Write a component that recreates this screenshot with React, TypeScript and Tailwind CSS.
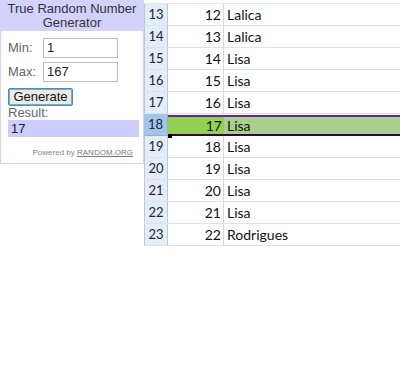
import React from 'react';

const rows: [number, number, string][] = [
    [13, 12, 'Lalica'],
    [14, 13, 'Lalica'],
    [15, 14, 'Lisa'],
    [16, 15, 'Lisa'],
    [17, 16, 'Lisa'],
    [18, 17, 'Lisa'],
    [19, 18, 'Lisa'],
    [20, 19, 'Lisa'],
    [21, 20, 'Lisa'],
    [22, 21, 'Lisa'],
    [23, 22, 'Rodrigues'],
];

function RandomWidget() {
    return (
        <div className="flex h-[164px] w-[144px] shrink-0 flex-col border border-[#d4d4fb] bg-white font-['Liberation_Sans',sans-serif]">
            {/* Header */}
            <div className="flex h-[30px] flex-col items-center justify-center bg-[#d2d2fd] text-[13px] leading-[14px] text-[#333]">
                <span>True Random Number</span>
                <span>Generator</span>
            </div>
            <div className="flex flex-col px-[7px] pt-[7px]">
                <div className="flex items-center">
                    <span className="w-[35px] text-[13px] text-[#666]">Min:</span>
                    <div className="flex h-[20px] w-[75px] items-center border border-[#bbb] px-[3px] text-[13px] text-[#222]">1</div>
                </div>
                <div className="mt-[4px] flex items-center">
                    <span className="w-[35px] text-[13px] text-[#666]">Max:</span>
                    <div className="flex h-[20px] w-[75px] items-center border border-[#bbb] px-[3px] text-[13px] text-[#222]">167</div>
                </div>
                <div className="mt-[6px] flex">
                    <div className="flex h-[18px] w-[65px] items-center justify-center rounded-[2px] border border-[#3c8fd8] bg-[#eceae4] text-[13px] text-[#111] shadow-[inset_0_0_0_1px_#8aa]">
                        Generate
                    </div>
                </div>
                <span className="text-[13px] leading-[14px] text-[#666]">Result:</span>
                <div className="flex h-[17px] w-[131px] items-center bg-[#ccccfd] px-[3px] text-[13px] text-[#222]">17</div>
                <div className="mt-[10px] pr-[3px] text-right text-[8px] text-[#888]">
                    Powered by <span className="text-[#777] underline">RANDOM.ORG</span>
                </div>
            </div>
        </div>
    );
}

function Sheet() {
    return (
        <div className="flex flex-1 flex-col pt-[3px] font-['Lato',sans-serif] text-[14px]">
            <div className="border-t border-[#e3e6ea]">
                {rows.map(([n, v, name]) => {
                    const sel = n === 18;
                    if (sel) {
                        return (
                            <div key={n} className="relative flex h-[22px] pt-[1px]">
                                <div className="-mt-[1px] flex w-[24px] items-center justify-center border-r border-b border-[#8db0d8] bg-[#a3c4e8] text-[13px] text-[#223]">
                                    {n}
                                </div>
                                <div className="flex w-[56px] items-center justify-end border-y-2 border-t-[#6a1fa0] border-b-[#2a0a3a] bg-[#93d152] pr-[2px] text-[#111]">
                                    {v}
                                </div>
                                <div className="flex flex-1 items-center border-y-2 border-t-[#6a1fa0] border-b-[#2a0a3a] bg-[#a8d08c] pl-[3px] text-[#111]">
                                    {name}
                                </div>
                                <div className="absolute bottom-[-2px] left-[24px] h-[4px] w-[4px] bg-black" />
                            </div>
                        );
                    }
                    return (
                        <div key={n} className="flex h-[22px] border-b border-[#dde2ea]">
                            <div className="flex w-[24px] items-center justify-center border-r border-l border-[#b9c9dd] bg-[#e4ecf7] text-[13px] text-[#223]">
                                {n}
                            </div>
                            <div className="flex w-[56px] items-center justify-end border-r border-[#d0d7e5] pr-[2px] text-[#111]">
                                {v}
                            </div>
                            <div className="flex flex-1 items-center pl-[3px] text-[#111]">{name}</div>
                        </div>
                    );
                })}
            </div>
        </div>
    );
}

export default function App() {
    return (
        <div className="flex h-[376px] w-[400px] items-start bg-white">
            <RandomWidget />
            <Sheet />
        </div>
    );
}
